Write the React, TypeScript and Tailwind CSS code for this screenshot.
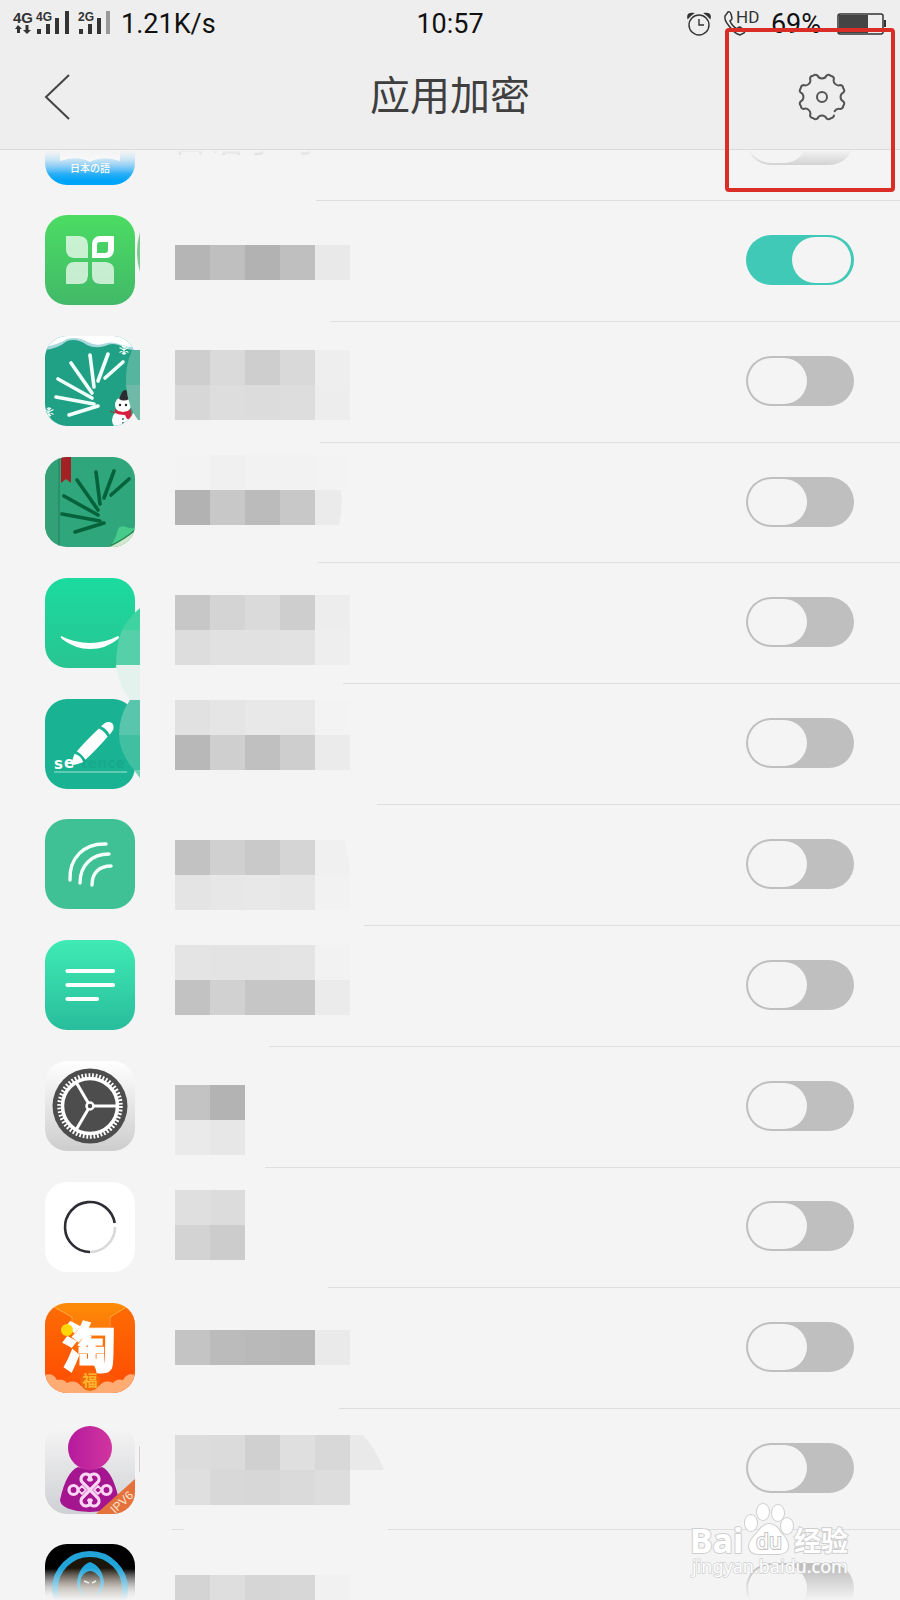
import React, { useState } from 'react';

interface AppItem {
  id: string;
  name?: string;
  locked: boolean;
  icon: React.ReactNode;
}

interface TileProps {
  id: string;
  from: string;
  to: string;
  children?: React.ReactNode;
}

// Rounded 90px app tile with a vertical gradient, everything inside is clipped to it
const Tile: React.FC<TileProps> = ({ id, from, to, children }) => (
  <svg viewBox="0 0 90 90" className="h-[90px] w-[90px]" aria-hidden="true">
    <defs>
      <linearGradient id={`${id}-bg`} x1="0" y1="0" x2="0" y2="1">
        <stop offset="0" stopColor={from} />
        <stop offset="1" stopColor={to} />
      </linearGradient>
      <clipPath id={`${id}-clip`}>
        <rect width="90" height="90" rx="22" />
      </clipPath>
    </defs>
    <g clipPath={`url(#${id}-clip)`}>
      <rect width="90" height="90" fill={`url(#${id}-bg)`} />
      {children}
    </g>
  </svg>
);

const JapaneseIcon = () => (
  <svg viewBox="0 0 90 90" className="h-[90px] w-[90px]" aria-hidden="true">
    <defs>
      <linearGradient id="jp-bg" x1="0" y1="0" x2="0" y2="1">
        <stop offset="0.6" stopColor="#cfe6f8" />
        <stop offset="0.78" stopColor="#5fbdf5" />
        <stop offset="0.95" stopColor="#00a4f8" />
      </linearGradient>
    </defs>
    <rect width="90" height="90" rx="22" fill="url(#jp-bg)" />
    <path d="M15 40H75V66Q58 60 45 67Q32 60 15 66Z" fill="#fbfdff" />
    <path d="M45 60Q56 54 70 56V52H50Z" fill="#d5e7f7" />
    <text x="45" y="77" textAnchor="middle" fontSize="10" fontWeight="500" fill="#fff" fontFamily='"Noto Sans CJK JP", sans-serif'>
      日本の語
    </text>
  </svg>
);

const LeavesIcon = () => (
  <Tile id="leaves" from="#4bdc62" to="#42b969">
    <g fill="#fff" fillOpacity="0.7">
      <path d="M21 21H35Q43 22 43 30V43H29Q21 42 21 35Z" />
      <path d="M43 47V61Q42 69 35 69H21V55Q22 47 29 47Z" />
      <path d="M47 47H61Q69 48 69 55V69H55Q47 68 47 61Z" />
    </g>
    <path
      d="M69 21V35Q68 43 61 43H47V29Q48 21 55 21Z M63 27H55Q52 27 52 30V38H60Q63 38 63 35Z"
      fill="#fff"
      fillRule="evenodd"
    />
  </Tile>
);

const needles: [number, number, number, number][] = [
  [49, 51, 45, 19],
  [47, 57, 26, 27],
  [53, 45, 63, 18],
  [60, 42, 78, 26],
  [47, 62, 13, 43],
  [49, 68, 11, 61],
  [53, 70, 24, 79],
];

const Needles: React.FC<{ color: string }> = ({ color }) => (
  <g stroke={color} strokeWidth="3.6" strokeLinecap="round">
    {needles.map(([x1, y1, x2, y2]) => (
      <line key={`${x1}-${x2}`} x1={x1} y1={y1} x2={x2} y2={y2} />
    ))}
  </g>
);

const Snowflake: React.FC<{ x: number; y: number }> = ({ x, y }) => (
  <path
    transform={`translate(${x} ${y})`}
    d="M0 -5V5M-4.5 -2.5L4.5 2.5M-4.5 2.5L4.5 -2.5M-2 -4L0 -2L2 -4M-2 4L0 2L2 4"
    stroke="#e9fbf7"
    strokeWidth="1.2"
    fill="none"
  />
);

const SnowIcon = () => (
  <Tile id="snow" from="#20a085" to="#20a085">
    <path d="M0 0H90V14Q82 14 76 10Q68 6 60 10Q50 13 42 9Q32 2 22 5Q12 13 0 14Z" fill="#a9d9dc" />
    <path d="M0 0H90V11Q80 11 74 8Q66 5 58 8Q50 10 43 6Q32 0 22 3Q12 9 0 11Z" fill="#fff" />
    <Needles color="#f1fffa" />
    <Snowflake x={79} y={14} />
    <Snowflake x={4} y={76} />
    <path d="M65 75L72 78" stroke="#7a4a3a" strokeWidth="1" />
    <circle cx="77" cy="84" r="10" fill="#f7fbfb" />
    <circle cx="78" cy="69" r="8" fill="#fff" />
    <path d="M74 63L77 56Q80 52 84 56L84 63Q79 66 74 63Z" fill="#2c2b31" />
    <circle cx="75" cy="69" r="1.2" fill="#222" />
    <circle cx="81" cy="69" r="1.2" fill="#222" />
    <path d="M70 73Q78 79 86 73L86 77L87 83L82 83L80 79Q74 79 70 77Z" fill="#d81f3d" />
    <circle cx="78" cy="83" r="1" fill="#3b6b66" />
    <circle cx="78" cy="87" r="1" fill="#3b6b66" />
  </Tile>
);

const BookIcon = () => (
  <Tile id="book" from="#2fa67b" to="#2fa67b">
    <rect width="14" height="90" fill="#32a178" />
    <rect x="13" width="2" height="90" fill="#28916b" />
    <path d="M16 0H26V26L21 22L16 26Z" fill="#a32125" />
    <g transform="translate(6 -4)">
      <Needles color="#06623a" />
    </g>
    <path d="M64 90L90 74V90Z" fill="#d5e8cd" />
    <path d="M65 89Q70 84 73 72Q75 68 81 70Q86 72 90 71Q88 77 65 89Z" fill="#46cb8a" />
    <path d="M65 89Q80 82 90 73" stroke="#268a5d" strokeWidth="1.5" fill="none" />
  </Tile>
);

const SmileIcon = () => (
  <Tile id="smile" from="#1bdb9f" to="#28c491">
    <path d="M16 58Q30 65 45 65Q60 65 73 58Q75 59 73 61Q61 71 45 71Q30 71 17 61Q15 59 16 58Z" fill="#fff" />
  </Tile>
);

const PencilIcon = () => (
  <Tile id="pencil" from="#19b394" to="#19b394">
    <text x="36" y="69" fontSize="14" fontWeight="700" fill="#16aa8b" fontFamily='"DejaVu Sans", sans-serif'>
      tence
    </text>
    <text x="9 19" y="70 69" fontSize="15" fontWeight="700" fill="#fff" fontFamily='"DejaVu Sans", sans-serif'>
      se
    </text>
    <g transform="translate(27 66) rotate(-46)" fill="#fff">
      <path d="M0 0Q2 -3 10 -6Q13 0 10 6Q3 3 0 0Z" />
      <path d="M13 -6Q27 -7 45 -6Q47 0 45 6Q27 7 13 6Q15 0 13 -6Z" />
      <path d="M48 -6Q57 -6 58 0Q57 6 48 6Q50 0 48 -6Z" />
    </g>
    <path d="M9 73H82" stroke="#a5e2d2" strokeWidth="1" />
  </Tile>
);

const WavesIcon = () => (
  <Tile id="waves" from="#3fc095" to="#3fc095">
    <g fill="none" stroke="#f4fffb" strokeWidth="3.4" strokeLinecap="round">
      <path d="M25 61C24 39 39 24 61 25" />
      <path d="M35 64C35 46 47 35 64 35" />
      <path d="M47 66C47 54 54 47 66 47" />
    </g>
  </Tile>
);

const NotesIcon = () => (
  <Tile id="notes" from="#40ebb4" to="#28bd9c">
    <g stroke="#fff" strokeWidth="4.2" strokeLinecap="round">
      <path d="M22.5 31H68" />
      <path d="M22.5 45H68" />
      <path d="M22.5 59H52" />
    </g>
  </Tile>
);

const SettingsIcon = () => (
  <Tile id="settings" from="#ffffff" to="#cdcdcd">
    <circle cx="45" cy="45" r="37.5" fill="#4d4d4d" />
    <circle cx="45" cy="45" r="30.5" fill="none" stroke="#fff" strokeWidth="4.5" strokeDasharray="1.8 1.75" />
    <circle cx="45" cy="45" r="27.5" fill="none" stroke="#fff" strokeWidth="3.5" />
    <g stroke="#fff" strokeWidth="3">
      <path d="M49 45H72" />
      <path d="M43 41.5L31 21" />
      <path d="M43 48.5L31 69" />
    </g>
    <circle cx="45" cy="45" r="3.5" fill="none" stroke="#fff" strokeWidth="2.5" />
  </Tile>
);

const RingIcon = () => (
  <Tile id="ring" from="#ffffff" to="#ffffff">
    <g fill="none" strokeWidth="2.6">
      <path d="M70 45A25 25 0 0 1 45 70" stroke="#d9d9d9" />
      <path d="M45 70A25 25 0 1 1 69.7 41" stroke="#2d2d33" />
    </g>
  </Tile>
);

const TaobaoIcon = () => (
  <Tile id="taobao" from="#fd8b08" to="#fe4c05">
    <path d="M0 0L27 15V70L0 90Z" fill="#ff4a00" fillOpacity="0.45" />
    <path d="M90 0L64 15V70L90 90Z" fill="#ff4a00" fillOpacity="0.45" />
    <path d="M8 3L27 14V24M83 3L65 14V24" stroke="#ffa43a" strokeWidth="1" fill="none" />
    <path
      d="M0 72Q8 69 12 77Q18 75 22 80Q30 76 36 83H54Q60 76 68 80Q72 75 78 77Q82 69 90 72V90H0Z"
      fill="#ffab74"
    />
    <text
      x="44"
      y="65"
      textAnchor="middle"
      fontSize="54"
      fontWeight="900"
      fill="#fff"
      stroke="#fff"
      strokeWidth="1"
      fontFamily='"Noto Sans CJK SC", sans-serif'
    >
      淘
    </text>
    <circle cx="22" cy="27" r="6" fill="#ffd60a" />
    <circle cx="45" cy="78" r="10" fill="#f26a0c" />
    <text x="45" y="83" textAnchor="middle" fontSize="15" fontWeight="700" fill="#ffb62e" fontFamily='"Noto Sans CJK SC", sans-serif'>
      福
    </text>
  </Tile>
);

const UnicomIcon = () => (
  <Tile id="unicom" from="#f6f6f6" to="#cfd0d4">
    <defs>
      <linearGradient id="unicom-body" x1="0" y1="0" x2="1" y2="0">
        <stop offset="0" stopColor="#b51a9d" />
        <stop offset="1" stopColor="#d2359f" />
      </linearGradient>
    </defs>
    <path d="M33 43Q45 47 57 43Q68 48 74 76Q74 87 45 88Q16 87 15 76Q21 48 33 43Z" fill="#a5158f" />
    <circle cx="45" cy="24" r="22" fill="url(#unicom-body)" />
    <g fill="none" stroke="#fbd6f3" strokeWidth="3.2">
      <path d="M43 57Q45 54 45 52A5 5 0 1 0 37 58L53 74A5 5 0 1 1 45 80Q45 77 43 75" />
      <path d="M47 57Q45 54 45 52A5 5 0 1 1 53 58L37 74A5 5 0 1 0 45 80Q45 77 47 75" />
      <circle cx="28.5" cy="66" r="4.5" />
      <circle cx="61.5" cy="66" r="4.5" />
      <path d="M33 66L37 62L41 66L37 70ZM57 66L53 62L49 66L53 70Z" strokeWidth="1.8" />
    </g>
    <path d="M51 90L90 55V90Z" fill="#e5713b" />
    <text
      transform="translate(70 90) rotate(-43)"
      fontSize="12"
      fill="#fde3d3"
      fontFamily='"Liberation Sans", sans-serif'
    >
      IPV6
    </text>
  </Tile>
);

const HoodIcon = () => (
  <Tile id="hood" from="#000000" to="#000000">
    <defs>
      <linearGradient id="hood-glow" x1="0" y1="0" x2="0" y2="1">
        <stop offset="0.2" stopColor="#1c150a" />
        <stop offset="0.5" stopColor="#8a7c6c" />
      </linearGradient>
      <linearGradient id="hood-fade" x1="0" y1="0" x2="0" y2="1">
        <stop offset="0.28" stopColor="#f4f4f4" stopOpacity="0" />
        <stop offset="0.62" stopColor="#f4f4f4" />
      </linearGradient>
    </defs>
    <rect width="90" height="90" fill="url(#hood-fade)" />
    <circle cx="45" cy="45" r="35" fill="url(#hood-glow)" stroke="#22a4d8" strokeWidth="6" />
    <path
      d="M45 18Q57 22 59 38Q58 50 50 53Q57 44 55 34Q50 27 45 27Q39 28 36 34Q33 44 40 53Q33 50 32 38Q34 22 45 18Z"
      fill="#20a5da"
    />
    <path d="M39 37L44 39M51 37L47 39" stroke="#e8e8e8" strokeWidth="1.5" />
  </Tile>
);

const initialApps: AppItem[] = [
  { id: 'japanese', name: '日语学习', locked: false, icon: <JapaneseIcon /> },
  { id: 'leaves', locked: true, icon: <LeavesIcon /> },
  { id: 'snow', locked: false, icon: <SnowIcon /> },
  { id: 'book', locked: false, icon: <BookIcon /> },
  { id: 'smile', locked: false, icon: <SmileIcon /> },
  { id: 'pencil', locked: false, icon: <PencilIcon /> },
  { id: 'waves', locked: false, icon: <WavesIcon /> },
  { id: 'notes', locked: false, icon: <NotesIcon /> },
  { id: 'settings', locked: false, icon: <SettingsIcon /> },
  { id: 'ring', locked: false, icon: <RingIcon /> },
  { id: 'taobao', locked: false, icon: <TaobaoIcon /> },
  { id: 'unicom', locked: false, icon: <UnicomIcon /> },
  { id: 'hood', locked: false, icon: <HoodIcon /> },
];

// Pixelated app names: top of each strip and the grey of every 35px block
const mosaic: [number, string[]][] = [
  [245, ['#b5b5b5', '#bfbfbf', '#b2b2b2', '#bfbfbf', '#e9e9e9']],
  [350, ['#cecece', '#dadada', '#cecece', '#d9d9d9', '#eeeeee']],
  [385, ['#d7d7d7', '#dddddd', '#dcdcdc', '#dddddd', '#ededed']],
  [455, ['#f3f3f3', '#f0f0f0', '#f2f2f2', '#f2f2f2', '#f3f3f3']],
  [490, ['#b2b2b2', '#c8c8c8', '#bbbbbb', '#c8c8c8']],
  [595, ['#c7c7c7', '#d4d4d4', '#dadada', '#cecece', '#ededed']],
  [630, ['#dddddd', '#e1e1e1', '#e1e1e1', '#e2e2e2', '#eeeeee']],
  [700, ['#e1e1e1', '#e5e5e5', '#e8e8e8', '#e8e8e8', '#f3f3f3']],
  [735, ['#b8b8b8', '#cfcfcf', '#c0c0c0', '#cecece', '#ebebeb']],
  [840, ['#c2c2c2', '#d0d0d0', '#c9c9c9', '#d5d5d5']],
  [875, ['#e4e4e4', '#e7e7e7', '#e8e8e8', '#e6e6e6', '#f2f2f2']],
  [945, ['#e4e4e4', '#e3e3e3', '#e3e3e3', '#e4e4e4', '#f2f2f2']],
  [980, ['#c2c2c2', '#d1d1d1', '#c6c6c6', '#c6c6c6', '#ebebeb']],
  [1085, ['#c3c3c3', '#b3b3b3']],
  [1120, ['#eaeaea', '#e7e7e7']],
  [1190, ['#dfdfdf', '#dcdcdc']],
  [1225, ['#d3d3d3', '#cccccc']],
  [1330, ['#c4c4c4', '#bbbbbb', '#b9b9b9', '#b7b7b7', '#eaeaea']],
  [1435, ['#dcdcdc', '#dbdbdb', '#d0d0d0', '#dfdfdf', '#d8d8d8']],
  [1470, ['#dfdfdf', '#d8d8d8', '#d7d7d7', '#dadada', '#dddddd']],
  [1575, ['#d4d4d4', '#dedede', '#d6d6d6', '#d7d7d7', '#f1f1f1']],
];

// Stretches of the separators that the smudge wipes out: y, from x, to x
const smudges: [number, number, number][] = [
  [200, 160, 316],
  [321, 160, 331],
  [442, 160, 320],
  [563, 160, 318],
  [683, 160, 343],
  [804, 160, 377],
  [925, 160, 364],
  [1046, 160, 269],
  [1167, 160, 265],
  [1288, 160, 328],
  [1408, 160, 339],
  [1529, 184, 388],
];

const CensorLayer = () => (
  <svg
    viewBox="0 150 400 1450"
    className="pointer-events-none absolute left-0 top-0 h-[1450px] w-[400px]"
    shapeRendering="crispEdges"
    aria-hidden="true"
  >
    {smudges.map(([y, from, to]) => (
      <rect key={y} x={from} y={y - 3} width={to - from} height="7" fill="#f4f4f4" />
    ))}
    {mosaic.map(([y, shades]) =>
      shades.map((shade, i) => <rect key={`${y}-${i}`} x={175 + i * 35} y={y} width="35" height="35" fill={shade} />)
    )}
    <g shapeRendering="auto">
      <path d="M315 490H341Q343 507 339 525H315Z" fill="#ebebeb" />
      <path d="M315 840H344Q349 856 350 875H315Z" fill="#f0f0f0" />
      <path d="M350 1435H363Q374 1446 384 1470H350Z" fill="#e9e9e9" />
      <path d="M140 232Q134 252 140 272Z" fill="#7ccb8c" />
      <path d="M132 350H140V385H126Q125 366 132 350Z" fill="#55b59f" />
      <path d="M126 385H140V420H138Q128 408 126 385Z" fill="#6fb9a6" />
      <path d="M140 608V630H122Q129 617 140 608Z" fill="#40d3a2" />
      <path d="M122 630H140V665H116Q116 645 122 630Z" fill="#55d0a9" />
      <path d="M116 665H140V700H130Q118 685 116 665Z" fill="#e4f2ee" />
      <path d="M130 700H140V735H119Q119 715 130 700Z" fill="#5ac5ad" />
      <path d="M119 735H140V770H134Q119 752 119 735Z" fill="#40c0a0" />
      <path d="M134 770H140V778Z" fill="#70d0b8" />
      <path d="M139 1446H140V1472H139Z" fill="#d9ccd6" />
    </g>
  </svg>
);

interface RowProps {
  app: AppItem;
  label: string;
  onToggle: (id: string) => void;
}

const AppRow: React.FC<RowProps> = ({ app, label, onToggle }) => (
  <label className="flex min-h-[120px] flex-1 shrink-0 cursor-pointer items-center gap-[37px] pl-[45px]">
    <span className="pb-0.5">{app.icon}</span>
    <span className="flex flex-1 items-center justify-between self-stretch border-b border-[#dedede] pb-0.5 pr-[46px]">
      <span className="text-4xl text-[#8a8a8a]">{app.name}</span>
      <input
        type="checkbox"
        role="switch"
        aria-label={label}
        checked={app.locked}
        onChange={() => onToggle(app.id)}
        className="relative h-[50px] w-[108px] shrink-0 cursor-pointer appearance-none rounded-full bg-[#bfbfbf] before:absolute before:left-[2px] before:top-[2px] before:h-[46px] before:w-[59px] before:rounded-full before:bg-[#f4f4f4] checked:bg-[#40c9b7] checked:before:left-[46px]"
      />
    </span>
  </label>
);

const Signal = () => (
  <svg viewBox="0 0 100 26" className="h-[26px] w-[100px] overflow-visible" fill="#333" aria-hidden="true">
    <g fontFamily='"Liberation Sans", sans-serif' fontWeight="700">
      <text x="0" y="12" fontSize="15">4G</text>
      <text x="23" y="10" fontSize="12">4G</text>
      <text x="65" y="10" fontSize="12">2G</text>
    </g>
    <path d="M5 14L9 18H7V22H4V18H2ZM14 23L10 19H12.5V14H15.5V19H18Z" />
    <path d="M24 18H28V23H24ZM33 13H37V23H33ZM42 7H46V23H42ZM52 0H56V23H52Z" />
    <path d="M66 18H70V23H66ZM75 13H79V23H75ZM84 7H88V23H84Z" />
    <path d="M93 0H97V23H93Z" fill="#9a9a9a" />
  </svg>
);

const AlarmIcon = () => (
  <svg viewBox="0 0 24 24" className="h-[24px] w-[24px]" fill="none" stroke="#333" strokeWidth="1.4" aria-hidden="true">
    <circle cx="12" cy="13" r="10" />
    <path d="M12 7V13H17" />
    <path d="M1 6Q0 1 6 1.5L3.5 3.5ZM23 6Q24 1 18 1.5L20.5 3.5Z" fill="#333" />
  </svg>
);

const CallIcon = () => (
  <svg viewBox="0 0 36 26" className="h-[26px] w-[36px] overflow-visible" aria-hidden="true">
    <path
      d="M5 1L2 5Q1 9 6 15Q12 23 17 24L21 22Q23 20 20 18L17 16Q15 16 14 18Q9 15 7 10Q9 9 9 7L8 3Q7 0 5 1Z"
      fill="none"
      stroke="#333"
      strokeWidth="1.5"
    />
    <text x="13" y="12" fontSize="17" fill="#333" fontFamily='"Roboto", sans-serif'>HD</text>
  </svg>
);

const Battery = () => (
  <svg viewBox="0 0 50 22" className="h-[22px] w-[50px]" aria-hidden="true">
    <rect x="1" y="1" width="45" height="20" rx="2" fill="none" stroke="#333" strokeWidth="1.5" />
    <rect x="2" y="2" width="29" height="18" fill="#444" />
    <rect x="47" y="7" width="2" height="7" fill="#333" />
  </svg>
);

const point = (angle: number, r: number) => {
  const a = (angle * Math.PI) / 180;
  return `${24 + r * Math.cos(a)} ${24 + r * Math.sin(a)}`;
};

// Eight round teeth, the outline stays open at the lower right
const gearPath =
  Array.from({ length: 8 }, (_, k) => {
    const a = 45 + k * 45;
    const start = k === 0 ? `M${point(a + 12, 22)}` : `A5 5 0 0 0 ${point(a + 12, 22)}`;
    return `${start}Q${point(a + 16, 24)} ${point(a + 22, 23)}Q${point(a + 29, 24)} ${point(a + 33, 22)}`;
  }).join('') + `A5 5 0 0 0 ${point(48, 19)}`;

const GearIcon = () => (
  <svg viewBox="0 0 48 48" className="h-[48px] w-[48px]" fill="none" stroke="#555" strokeWidth="2" strokeLinecap="round" aria-hidden="true">
    <path d={gearPath} />
    <circle cx="24" cy="24" r="5" />
  </svg>
);

const Watermark = () => (
  <svg
    viewBox="0 0 170 82"
    className="pointer-events-none absolute bottom-[18px] right-[44px] h-[82px] w-[170px] overflow-visible"
    fill="#fff"
    stroke="#cfcfcf"
    strokeWidth="2"
    paintOrder="stroke"
    aria-hidden="true"
  >
    <g fontFamily='"Noto Sans", "Noto Sans CJK SC", sans-serif'>
      <text x="4" y="53" fontSize="34" fontWeight="700">Bai</text>
      <ellipse cx="65" cy="23" rx="6" ry="8" />
      <ellipse cx="77" cy="12" rx="6" ry="8" />
      <ellipse cx="92" cy="13" rx="6" ry="8" />
      <ellipse cx="101" cy="26" rx="6" ry="8" />
      <path d="M83 24Q90 24 94 32Q103 40 102 48Q100 54 92 54H73Q64 54 63 47Q63 40 72 32Q77 24 83 24Z" />
      <text x="83" y="49" fontSize="21" textAnchor="middle" stroke="#c4c4c4">du</text>
      <text x="108" y="51" fontSize="27" fontWeight="700">经验</text>
      <text x="6" y="73" fontSize="18" strokeWidth="1.5">jingyan.baidu.com</text>
    </g>
  </svg>
);

export default function App() {
  const [apps, setApps] = useState(initialApps);

  const handleToggle = (id: string) => {
    setApps(apps.map((app) => (app.id === id ? { ...app, locked: !app.locked } : app)));
  };

  return (
    <div className="relative flex min-h-screen flex-col overflow-hidden bg-[#f4f4f4] font-['Roboto','Noto_Sans_CJK_SC',sans-serif]">
      <header className="border-b border-[#dadada] bg-[#eeeeee]">
        {/* Status bar */}
        <div className="grid h-[48px] grid-cols-[1fr_auto_1fr] items-center px-[13px] text-[27px] text-[#111]">
          <div className="flex items-center gap-2">
            <Signal />
            <span>1.21K/s</span>
          </div>
          <span>10:57</span>
          <div className="flex items-center justify-end gap-4">
            <div className="flex items-center gap-3">
              <AlarmIcon />
              <CallIcon />
              <span>69%</span>
            </div>
            <Battery />
          </div>
        </div>

        {/* Title bar */}
        <div className="grid h-[101px] grid-cols-[1fr_auto_1fr] items-center px-10 pb-1">
          <button type="button" aria-label="返回" className="justify-self-start">
            <svg viewBox="0 0 34 48" className="h-[48px] w-[34px]" fill="none" stroke="#444" strokeWidth="2" aria-hidden="true">
              <path d="M29 2L6 24L29 46" />
            </svg>
          </button>
          <h1 className="text-[40px] text-[#3f3f3f]">应用加密</h1>
          <button type="button" aria-label="设置" className="mr-3.5 justify-self-end">
            <GearIcon />
          </button>
        </div>
      </header>

      <ul className="relative flex flex-1 flex-col">
        {apps.map((app, i) => {
          const row = <AppRow app={app} label={app.name ?? `应用 ${i + 1}`} onToggle={handleToggle} />;
          if (i === 0) {
            return (
              <li key={app.id} className="relative flex h-[51px] flex-col justify-end overflow-hidden">
                {row}
                <div className="pointer-events-none absolute inset-x-0 top-0 h-6 bg-linear-to-b from-[#f4f4f4] to-transparent" />
              </li>
            );
          }
          if (i === apps.length - 1) {
            return (
              <li key={app.id} className="relative flex h-[70px] flex-col overflow-hidden">
                {row}
                <div className="pointer-events-none absolute inset-x-0 bottom-0 h-8 bg-linear-to-b from-transparent to-[#f4f4f4]" />
              </li>
            );
          }
          return (
            <li key={app.id} className="flex flex-1 flex-col">
              {row}
            </li>
          );
        })}
        <CensorLayer />
      </ul>

      <Watermark />
      <div className="pointer-events-none absolute right-[5px] top-[28px] h-[164px] w-[170px] rounded-sm border-4 border-[#d92d25]" />
    </div>
  );
}
